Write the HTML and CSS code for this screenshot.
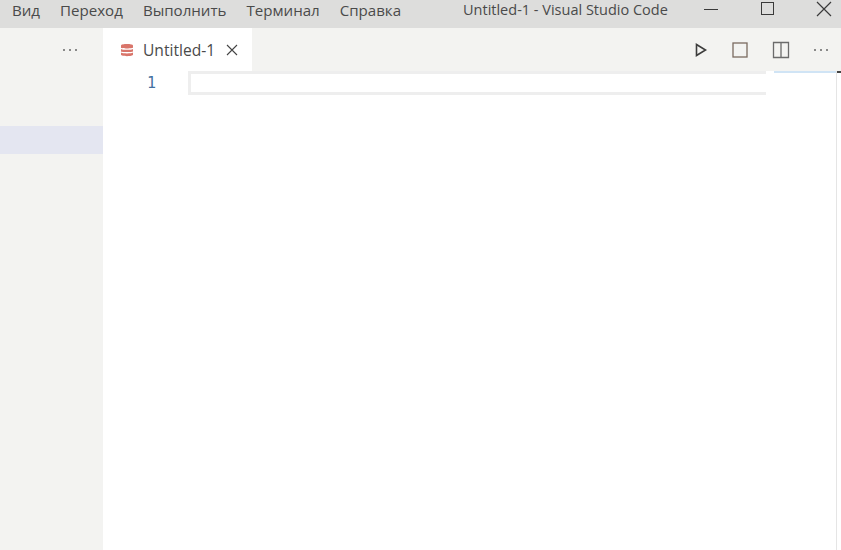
FILE: index.html
```html
<!DOCTYPE html>
<html lang="ru">
<head>
<meta charset="utf-8">
<title>Untitled-1 - Visual Studio Code</title>
<link rel="stylesheet" href="styles.css">
</head>
<body>
<div class="app">
  <header class="titlebar">
    <nav class="menu">
      <span>Вид</span><span>Переход</span><span>Выполнить</span><span>Терминал</span><span>Справка</span>
    </nav>
    <div class="title">Untitled-1 - Visual Studio Code</div>
    <div class="controls">
      <svg class="win min" width="16" height="16" viewBox="0 0 16 16"><path d="M1 8.5H15" stroke="#3a3a3a" fill="none"/></svg>
      <svg class="win max" width="16" height="16" viewBox="0 0 16 16"><rect x="2.5" y="1.5" width="12" height="12" stroke="#3a3a3a" fill="none"/></svg>
      <svg class="win close" width="16" height="16" viewBox="0 0 16 16"><path d="M1 1L15 15M15 1L1 15" stroke="#3a3a3a" stroke-width="1.2" fill="none"/></svg>
    </div>
  </header>
  <div class="body">
    <aside class="sidebar">
      <div class="side-head">
        <svg width="16" height="4" viewBox="0 0 16 4"><g fill="#666"><circle cx="2" cy="2" r="1"/><circle cx="8" cy="2" r="1"/><circle cx="14" cy="2" r="1"/></g></svg>
      </div>
      <div class="side-sel"></div>
    </aside>
    <main class="editor">
      <div class="tabs">
        <div class="tab">
          <svg class="dbicon" width="14" height="16" viewBox="0 0 14 16"><path d="M1 3.5C1 1.5 13 1.5 13 3.5V5.6C13 6.8 1 6.8 1 5.6Z M1 6.9C3 8.1 11 8.1 13 6.9V9.2C13 10.4 1 10.4 1 9.2Z M1 10.5C3 11.7 11 11.7 13 10.5V12.8C13 14.6 1 14.6 1 12.8Z" fill="#d9756a"/></svg>
          <span class="tab-label">Untitled-1</span>
          <svg class="tab-close" width="14" height="14" viewBox="0 0 14 14"><path d="M2 2L12 12M12 2L2 12" stroke="#444" stroke-width="1.1" fill="none"/></svg>
        </div>
        <div class="actions">
          <svg width="16" height="16" viewBox="0 0 16 16"><path d="M2.5 2.5L11.5 8L2.5 13.5Z" stroke="#3c3c3c" stroke-width="1.6" fill="none"/></svg>
          <svg class="spill" width="16" height="16" viewBox="0 0 16 16"><rect x="0" y="1" width="14" height="14" stroke="#7a6a60" stroke-width="1.3" fill="none"/></svg>
          <svg width="18" height="18" viewBox="0 0 18 18"><path d="M1.5 1.5H16.5V16.5H1.5Z M9 1.5V16.5" stroke="#6b6b6b" stroke-width="1.3" fill="none"/></svg>
          <svg width="16" height="4" viewBox="0 0 16 4"><g fill="#666"><circle cx="2" cy="2" r="1"/><circle cx="8" cy="2" r="1"/><circle cx="14" cy="2" r="1"/></g></svg>
        </div>
      </div>
      <div class="content">
        <div class="code">
          <div class="gutter">1</div>
          <div class="code-area"><div class="line-box"></div></div>
        </div>
        <div class="minimap"><div class="mini-bar"></div></div>
        <div class="ruler"><div class="ruler-mark"></div></div>
      </div>
    </main>
  </div>
</div>
</body>
</html>
```
FILE: styles.css
```css
html, body { margin: 0; padding: 0; }
body { width: 841px; height: 550px; overflow: hidden; background: #fff; font-family: "Open Sans", "Noto Sans", sans-serif; }
.app { display: flex; flex-direction: column; height: 550px; }
.titlebar { height: 28px; flex: none; background: #dddddc; display: flex; color: #4a4a4a; font-size: 15.1px; line-height: 20px; position: relative; }
.menu { display: flex; gap: 20px; padding-left: 12px; }
.menu span { display: block; }
.title { position: absolute; left: 463px; top: 0; white-space: nowrap; font-size: 14.5px; }
.controls { position: absolute; left: 0; top: 0; width: 841px; }
.win { position: absolute; top: 1px; }
.min { left: 703px; }
.max { left: 759px; }
.close { left: 816px; }
.body { flex: 1; display: flex; min-height: 0; }
.sidebar { width: 103px; flex: none; background: #f3f3f1; }
.side-head { height: 44px; display: flex; align-items: center; justify-content: flex-end; padding-right: 25px; }
.side-sel { margin-top: 54px; height: 28px; background: #e4e6f1; }
.editor { flex: 1; display: flex; flex-direction: column; min-width: 0; }
.tabs { height: 43px; flex: none; background: #f3f3f1; display: flex; justify-content: space-between; }
.tab { width: 149px; background: #fff; display: flex; align-items: center; box-sizing: border-box; padding-left: 17px; }
.tab-label { font-size: 15.6px; color: #4a4a4a; margin-left: 9px; line-height: 20px; }
.tab-close { margin-left: 10px; }
.actions { display: flex; align-items: center; gap: 23px; padding-right: 12px; }
.spill { overflow: visible; }
.content { flex: 1; display: flex; min-height: 0; }
.code { width: 663px; display: flex; flex: none; }
.gutter { width: 85px; flex: none; box-sizing: border-box; padding-left: 44px; font-family: "DejaVu Sans Mono", monospace; font-size: 15px; line-height: 24px; color: #44709f; }
.code-area { flex: 1; }
.line-box { height: 18px; border: 3px solid #eeeeee; border-right: 0; }
.minimap { width: 70px; flex: none; padding-left: 8px; box-sizing: border-box; }
.mini-bar { height: 2px; background: #d0e4f5; }
.ruler { flex: 1; border-left: 1px solid #e5e5e5; }
.ruler-mark { height: 2px; background: #444; }
```
